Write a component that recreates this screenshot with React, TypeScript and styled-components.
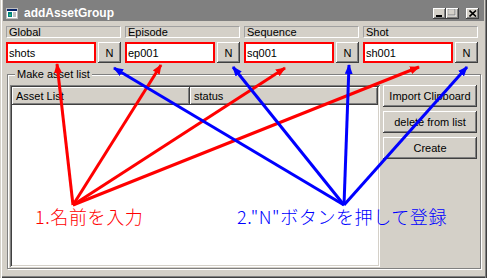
import React from "react";
import styled, { createGlobalStyle } from "styled-components";

const GlobalStyle = createGlobalStyle`
  html, body {
    margin: 0;
    padding: 0;
    background: #fff;
  }
  body {
    font-family: "Liberation Sans", Arial, sans-serif;
    font-size: 11px;
    color: #000;
  }
`;

const raised = `
  background: #d4d0c8;
  box-shadow: inset -1px -1px #404040, inset 1px 1px #fff,
    inset -2px -2px #808080, inset 2px 2px #d4d0c8;
`;

const Window = styled.div`
  position: relative;
  width: 487px;
  height: 278px;
  box-sizing: border-box;
  padding: 0 3px 3px 3px;
  background: #d4d0c8;
  box-shadow: inset 1px 0 #d4d0c8, inset 2px 0 #fff, inset -1px 0 #404040,
    inset -2px 0 #808080, inset 0 -1px #404040, inset 0 -2px #808080;
  display: flex;
  flex-direction: column;
  overflow: hidden;
`;

const TitleBar = styled.div`
  height: 21px;
  box-sizing: border-box;
  padding: 5px 5px 0 3px;
  background: #808080;
  display: flex;
  align-items: center;
`;

const TitleText = styled.span`
  margin-left: 6px;
  color: #fff;
  font-weight: bold;
  font-size: 12px;
  flex: 1;
`;

const TitleButtons = styled.div`
  display: flex;
  align-items: center;
`;

const CapButton = styled.div<{ $gap?: number }>`
  ${raised}
  width: 13px;
  height: 11px;
  margin-left: ${(p) => p.$gap ?? 0}px;
  display: flex;
  align-items: center;
  justify-content: center;
`;

const Content = styled.div`
  flex: 1;
  display: flex;
  flex-direction: column;
  padding: 5px 0 0 3px;
`;

const Fields = styled.div`
  display: grid;
  grid-template-columns: repeat(4, 115px);
  column-gap: 4px;
`;

const Field = styled.div`
  display: flex;
  flex-direction: column;
  gap: 4px;
`;

const FieldLabel = styled.div`
  height: 12px;
  box-sizing: border-box;
  border: 1px solid;
  border-color: #a0a0a0 #fff #fff #a0a0a0;
  padding-left: 2px;
  line-height: 10px;
`;

const FieldRow = styled.div`
  display: flex;
  gap: 2px;
  height: 21px;
`;

const NameInput = styled.div`
  flex: 1;
  box-sizing: border-box;
  border: 2px solid #ff0000;
  background: #fff;
  padding-left: 1px;
  display: flex;
  align-items: center;
`;

const NButton = styled.div`
  ${raised}
  width: 23px;
  display: flex;
  align-items: center;
  justify-content: center;
`;

const GroupBox = styled.div`
  position: relative;
  width: 474px;
  box-sizing: border-box;
  margin: 11px 0 6px 1px;
  flex: 1;
  border: 1px solid #808080;
  box-shadow: inset 1px 1px #fff, 1px 1px #fff;
  padding: 10px 3px 1px 2px;
  display: flex;
  gap: 3px;
`;

const Legend = styled.span`
  position: absolute;
  left: 7px;
  top: -7px;
  padding: 0 2px;
  background: #d4d0c8;
  line-height: 12px;
`;

const ListView = styled.div`
  width: 370px;
  box-sizing: border-box;
  background: #fff;
  box-shadow: inset 1px 1px #808080, inset -1px -1px #fff,
    inset 2px 2px #404040, inset -2px -2px #d4d0c8;
  padding: 2px;
`;

const ListHeader = styled.div`
  display: flex;
  height: 18px;
`;

const HeaderCell = styled.div<{ $w?: number }>`
  ${raised}
  ${(p) => (p.$w ? `width: ${p.$w}px;` : "flex: 1;")}
  box-sizing: border-box;
  padding-left: 4px;
  display: flex;
  align-items: center;
`;

const Side = styled.div`
  width: 94px;
  display: flex;
  flex-direction: column;
  gap: 4px;
`;

const ActionButton = styled.div`
  ${raised}
  height: 22px;
  display: flex;
  align-items: center;
  justify-content: center;
`;

const Overlay = styled.div`
  position: absolute;
  inset: 0;
  pointer-events: none;
`;

const Note = styled.span<{ $color: string; $x: number }>`
  position: absolute;
  left: ${(p) => p.$x}px;
  top: 207px;
  color: ${(p) => p.$color};
  font-family: "Noto Sans CJK JP", "Noto Sans", sans-serif;
  font-size: 18px;
  font-weight: 300;
  letter-spacing: 0.6px;
  line-height: 18px;
  white-space: nowrap;
`;

const fields = [
  { label: "Global", value: "shots" },
  { label: "Episode", value: "ep001" },
  { label: "Sequence", value: "sq001" },
  { label: "Shot", value: "sh001" },
];

const redTargets = [
  [57, 64],
  [161, 65],
  [285, 68],
  [419, 67],
];
const blueTargets = [
  [114, 68],
  [233, 67],
  [349, 65],
  [467, 67],
];

const WinIcon = () => (
  <svg width="12" height="11" viewBox="0 0 12 11">
    <rect x="0.5" y="0.5" width="11" height="10" fill="#fff" stroke="#c0c0c0" />
    <rect x="1" y="1" width="10" height="2" fill="#0a246a" />
    <rect x="2" y="4" width="4" height="5" fill="#008080" />
    <rect x="3" y="6" width="2" height="2" fill="#3cb371" />
    <rect x="7" y="4" width="3" height="5" fill="#c0c0c0" />
  </svg>
);

export default function App() {
  return (
    <>
      <GlobalStyle />
      <Window>
        <TitleBar>
          <WinIcon />
          <TitleText>addAssetGroup</TitleText>
          <TitleButtons>
            <CapButton>
              <svg width="7" height="7" viewBox="0 0 7 7">
                <rect x="0" y="5" width="6" height="2" fill="#000" />
              </svg>
            </CapButton>
            <CapButton>
              <svg width="9" height="8" viewBox="0 0 9 8">
                <rect x="0.5" y="0.5" width="7" height="6" fill="none" stroke="#fff" />
                <rect x="0" y="0" width="7" height="6" fill="none" stroke="#808080" />
              </svg>
            </CapButton>
            <CapButton $gap={7}>
              <svg width="8" height="7" viewBox="0 0 8 7">
                <path d="M0.5 0.5 L7 6.5 M7 0.5 L0.5 6.5" stroke="#000" strokeWidth="1.6" />
              </svg>
            </CapButton>
          </TitleButtons>
        </TitleBar>
        <Content>
          <Fields>
            {fields.map((f) => (
              <Field key={f.label}>
                <FieldLabel>{f.label}</FieldLabel>
                <FieldRow>
                  <NameInput>{f.value}</NameInput>
                  <NButton>N</NButton>
                </FieldRow>
              </Field>
            ))}
          </Fields>
          <GroupBox>
            <Legend>Make asset list</Legend>
            <ListView>
              <ListHeader>
                <HeaderCell $w={178}>Asset List</HeaderCell>
                <HeaderCell>status</HeaderCell>
              </ListHeader>
            </ListView>
            <Side>
              <ActionButton>Import Clipboard</ActionButton>
              <ActionButton>delete from list</ActionButton>
              <ActionButton>Create</ActionButton>
            </Side>
          </GroupBox>
        </Content>
        <Overlay>
          <svg width="487" height="278" viewBox="0 0 487 278">
            <defs>
              <marker id="headRed" markerWidth="10" markerHeight="8" refX="9" refY="4" orient="auto" markerUnits="userSpaceOnUse">
                <path d="M0 0 L10 4 L0 8 Z" fill="#ff0000" />
              </marker>
              <marker id="headBlue" markerWidth="10" markerHeight="8" refX="9" refY="4" orient="auto" markerUnits="userSpaceOnUse">
                <path d="M0 0 L10 4 L0 8 Z" fill="#0000ff" />
              </marker>
            </defs>
            {redTargets.map(([x, y], i) => (
              <line key={"r" + i} x1={73} y1={205} x2={x} y2={y} stroke="#ff0000" strokeWidth="3" markerEnd="url(#headRed)" />
            ))}
            {blueTargets.map(([x, y], i) => (
              <line key={"b" + i} x1={344} y1={205} x2={x} y2={y} stroke="#0000ff" strokeWidth="3" markerEnd="url(#headBlue)" />
            ))}
          </svg>
          <Note $color="#ff0000" $x={35}>1.名前を入力</Note>
          <Note $color="#0000ff" $x={237}>2."N"ボタンを押して登録</Note>
        </Overlay>
      </Window>
    </>
  );
}
